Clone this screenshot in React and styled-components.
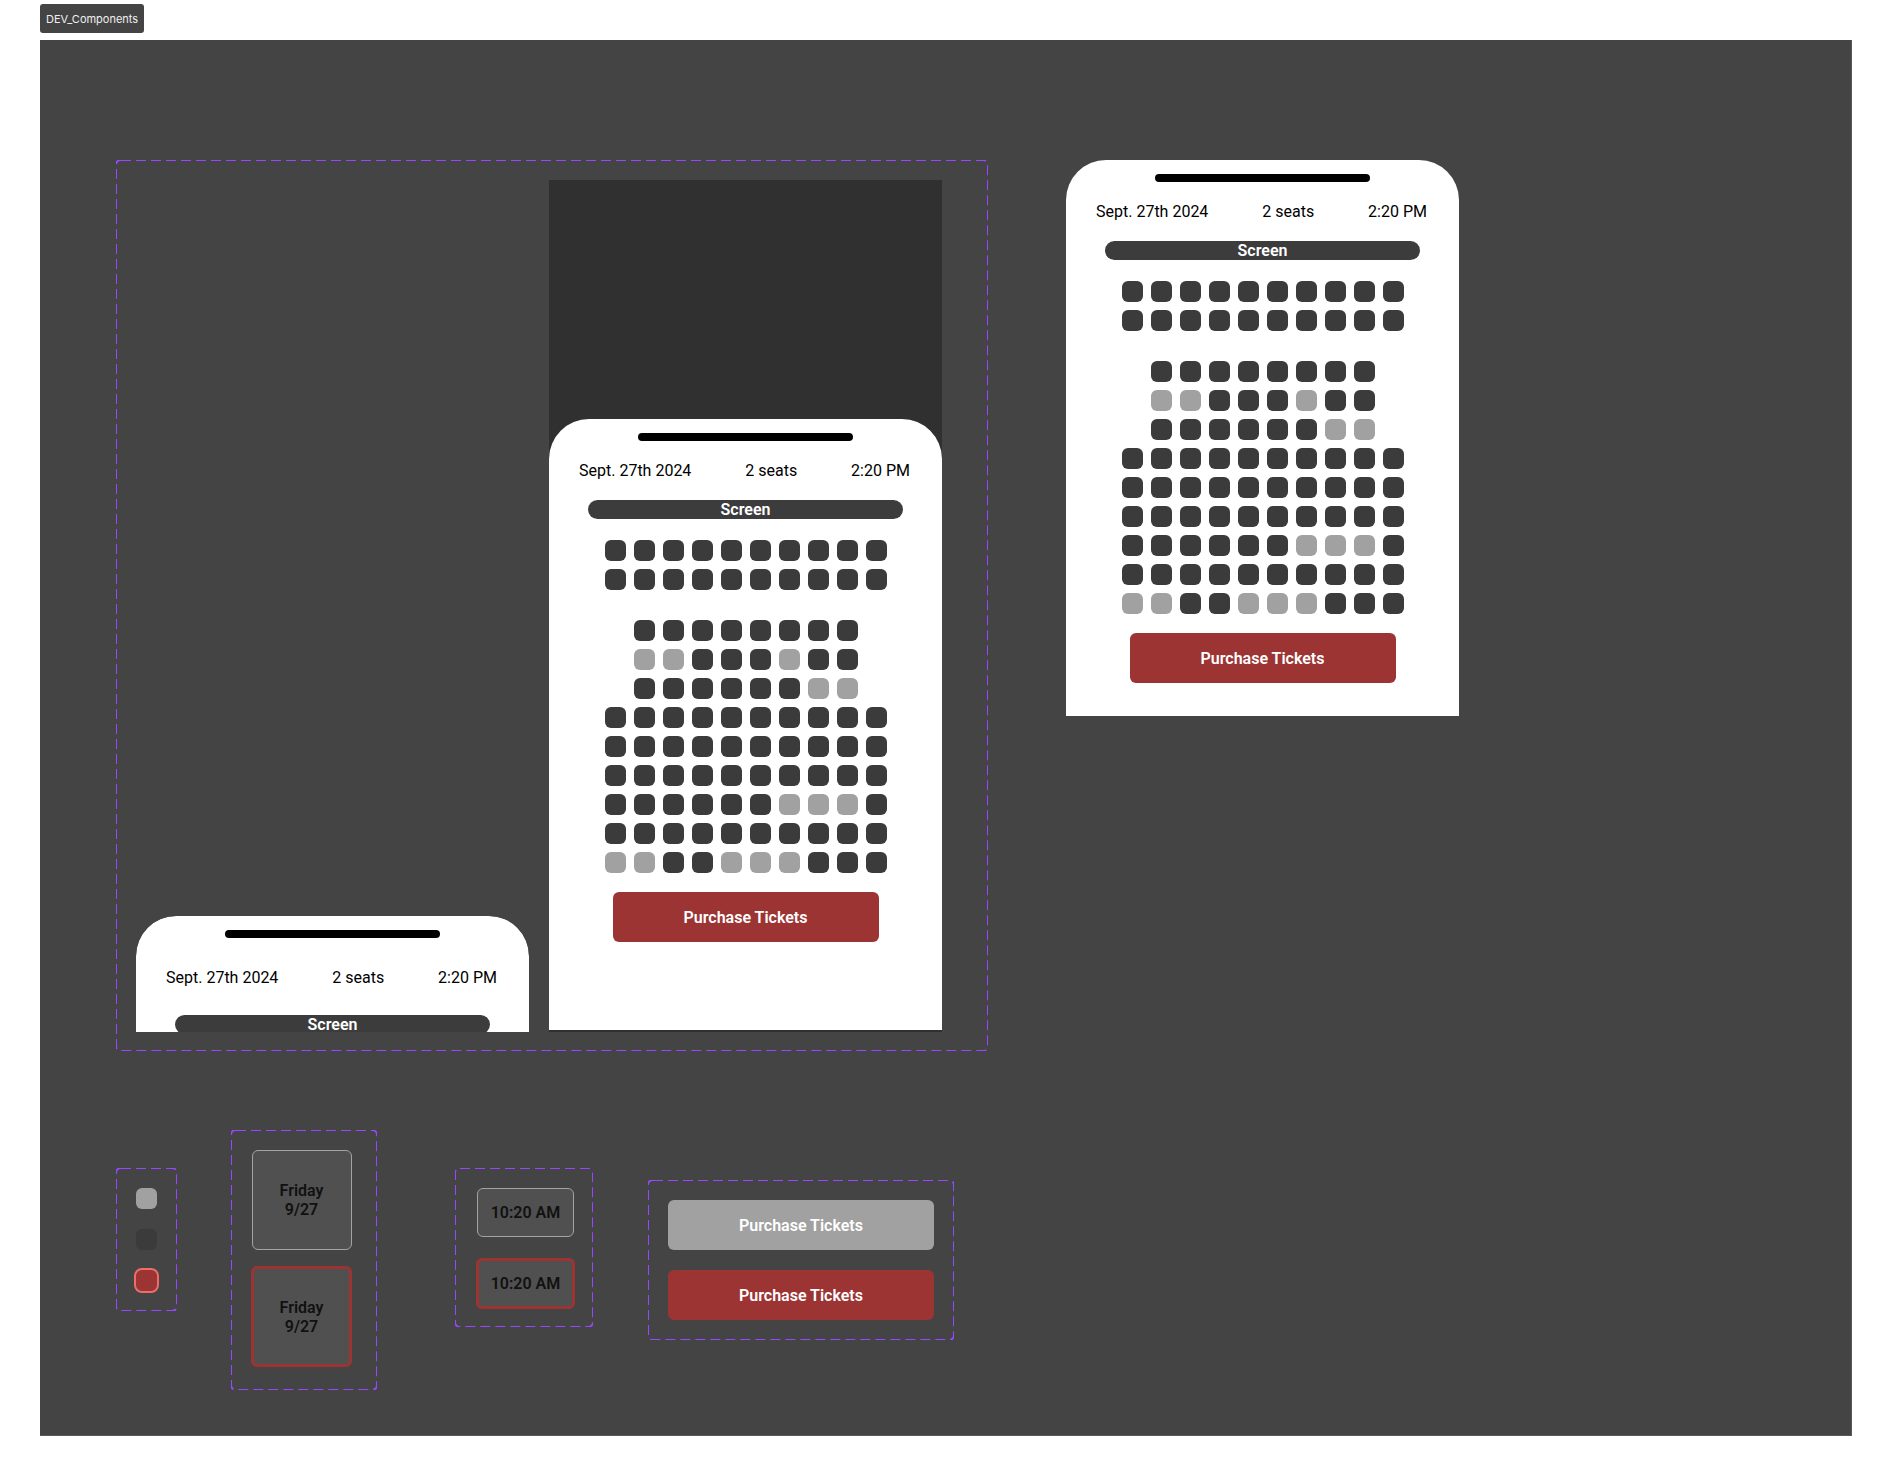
import styled, { createGlobalStyle } from "styled-components";

const GlobalStyle = createGlobalStyle`
  body {
    margin: 0;
    background: #fff;
    font-family: Roboto, "Liberation Sans", sans-serif;
  }
`;

const dashed = `url("data:image/svg+xml,%3csvg xmlns='http://www.w3.org/2000/svg' width='100%25' height='100%25'%3e%3crect width='100%25' height='100%25' fill='none' rx='5' ry='5' stroke='%239747FF' stroke-width='2' stroke-dasharray='10%2c 5'/%3e%3c/svg%3e")`;

const Page = styled.div`
  padding: 4px 0 40px 40px;
`;

const PageTag = styled.div`
  display: inline-flex;
  align-items: center;
  height: 29px;
  padding: 0 6px;
  margin-bottom: 7px;
  background: #444;
  color: #f0f0f0;
  border-radius: 3px;
  font-family: Inter, "Liberation Sans", sans-serif;
  font-size: 11px;
`;

const Canvas = styled.div`
  box-sizing: border-box;
  width: 1812px;
  height: 1396px;
  background: #444;
  border-right: 1px solid #5a5a5a;
  border-bottom: 1px solid #5a5a5a;
  padding: 120px 0 0 76px;
  display: flex;
  flex-direction: column;
  gap: 79px;
`;

const TopRow = styled.div`
  display: flex;
  align-items: flex-start;
  gap: 78px;
`;

const BottomRow = styled.div`
  display: flex;
  align-items: flex-start;
`;

const DashedFrame = styled.div`
  box-sizing: border-box;
  background-image: ${dashed};
  display: flex;
  flex-direction: ${(p) => (p.$column ? "column" : "row")};
  align-items: ${(p) => (p.$column ? "center" : "flex-end")};
  margin-left: ${(p) => p.$left || 0}px;
  margin-top: ${(p) => p.$top || 0}px;
  padding: ${(p) => p.$pad || "20px"};
  gap: ${(p) => p.$gap || 20}px;
`;

const Backdrop = styled.div`
  width: 393px;
  height: 852px;
  background: #303030;
  display: flex;
  align-items: flex-end;
  padding-bottom: 2px;
  box-sizing: border-box;
`;

const PhoneClip = styled.div`
  width: 393px;
  height: ${(p) => p.$height}px;
  overflow: hidden;
  border-radius: 40px 40px 0 0;
`;

const Sheet = styled.div`
  box-sizing: border-box;
  width: 393px;
  background: #fff;
  border-radius: 40px 40px 0 0;
  padding: 14px 0 ${(p) => p.$bottom}px;
  display: flex;
  flex-direction: column;
  align-items: center;
`;

const Handle = styled.div`
  width: 215px;
  height: 8px;
  border-radius: 4px;
  background: #000;
`;

const InfoRow = styled.div`
  box-sizing: border-box;
  width: 100%;
  margin-top: ${(p) => (p.$loose ? 30 : 20)}px;
  padding: 0 32px 0 30px;
  display: flex;
  justify-content: space-between;
  font-size: 16px;
  line-height: 19px;
  color: #000;
`;

const ScreenBar = styled.div`
  width: 315px;
  height: 19px;
  margin-top: ${(p) => (p.$loose ? 28 : 20)}px;
  border-radius: 10px;
  background: #3c3c3c;
  color: #fff;
  font-size: 16px;
  font-weight: 600;
  line-height: 19px;
  text-align: center;
`;

const SeatMap = styled.div`
  margin-top: 21px;
  display: flex;
  flex-direction: column;
  gap: 30px;
`;

const SeatBlock = styled.div`
  display: flex;
  flex-direction: column;
  gap: 8px;
`;

const SeatRow = styled.div`
  display: flex;
  justify-content: center;
  gap: 8px;
`;

const Seat = styled.div`
  width: 21px;
  height: 21px;
  border-radius: 6px;
  background: ${(p) =>
    p.$state === "taken" ? "#a1a1a1" : p.$state === "selected" ? "#9c3434" : "#3b3b3b"};
  outline: ${(p) => (p.$state === "selected" ? "2px solid #f26a6a" : "none")};
`;

const PurchaseButton = styled.button`
  width: 266px;
  height: 50px;
  margin-top: ${(p) => p.$top || 0}px;
  border: 0;
  border-radius: 6px;
  background: ${(p) => (p.$disabled ? "#a1a1a1" : "#9c3434")};
  color: #fff;
  font-family: Roboto, "Liberation Sans", sans-serif;
  font-size: 16px;
  font-weight: 600;
`;

const Chip = styled.div`
  box-sizing: border-box;
  width: ${(p) => p.$w}px;
  height: ${(p) => p.$h}px;
  border-radius: 6px;
  background: #505050;
  border: ${(p) => (p.$selected ? "3px solid #9c3434" : "1px solid #a3a3a3")};
  display: flex;
  flex-direction: column;
  align-items: center;
  justify-content: center;
  color: #111;
  font-size: 16px;
  font-weight: 600;
  line-height: 19px;
  white-space: nowrap;
`;

const front = ["0000000000", "0000000000"];
const back = [
  "00000000",
  "11000100",
  "00000011",
  "0000000000",
  "0000000000",
  "0000000000",
  "0000001110",
  "0000000000",
  "1100111000",
];

function Block({ rows }) {
  return (
    <SeatBlock>
      {rows.map((row, i) => (
        <SeatRow key={i}>
          {row.split("").map((c, j) => (
            <Seat key={j} $state={c === "1" ? "taken" : "free"} />
          ))}
        </SeatRow>
      ))}
    </SeatBlock>
  );
}

function Phone({ loose, bottom = 0 }) {
  return (
    <Sheet $bottom={bottom}>
      <Handle />
      <InfoRow $loose={loose}>
        <span>Sept. 27th 2024</span>
        <span>2 seats</span>
        <span>2:20 PM</span>
      </InfoRow>
      <ScreenBar $loose={loose}>Screen</ScreenBar>
      <SeatMap>
        <Block rows={front} />
        <Block rows={back} />
      </SeatMap>
      <PurchaseButton $top={19}>Purchase Tickets</PurchaseButton>
    </Sheet>
  );
}

function DateChip({ selected }) {
  return (
    <Chip $w={selected ? 101 : 100} $h={selected ? 101 : 100} $selected={selected}>
      <span>Friday</span>
      <span>9/27</span>
    </Chip>
  );
}

export default function App() {
  return (
    <Page>
      <GlobalStyle />
      <PageTag>DEV_Components</PageTag>
      <Canvas>
        <TopRow>
          <DashedFrame $pad="20px 46px 19px 20px">
            <PhoneClip $height={116}>
              <Phone loose />
            </PhoneClip>
            <Backdrop>
              <Phone bottom={88} />
            </Backdrop>
          </DashedFrame>
          <Phone bottom={33} />
        </TopRow>
        <BottomRow>
          <DashedFrame $column $top={38} $pad="20px 20px">
            <Seat $state="taken" />
            <Seat $state="free" />
            <Seat $state="selected" />
          </DashedFrame>
          <DashedFrame $column $left={54} $pad="20px 25px 23px 20px" $gap={16}>
            <DateChip />
            <DateChip selected />
          </DashedFrame>
          <DashedFrame $column $left={78} $top={38} $pad="20px 18px 18px 21px" $gap={21}>
            <Chip $w={97} $h={49}>10:20 AM</Chip>
            <Chip $w={99} $h={51} $selected>10:20 AM</Chip>
          </DashedFrame>
          <DashedFrame $column $left={55} $top={50}>
            <PurchaseButton $disabled>Purchase Tickets</PurchaseButton>
            <PurchaseButton>Purchase Tickets</PurchaseButton>
          </DashedFrame>
        </BottomRow>
      </Canvas>
    </Page>
  );
}
